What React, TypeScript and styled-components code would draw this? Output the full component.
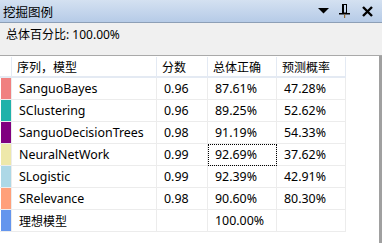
import * as React from "react";
import styled, { createGlobalStyle } from "styled-components";

const GlobalStyle = createGlobalStyle`
  html, body {
    margin: 0;
    padding: 0;
    background: #ffffff;
  }
  body {
    font-family: "Noto Sans", "Noto Sans CJK SC", sans-serif;
    color: #000000;
  }
`;

const Window = styled.div`
  width: 382px;
  height: 243px;
  overflow: hidden;
  display: flex;
  flex-direction: column;
  background: #ffffff;
`;

const TitleBar = styled.div`
  height: 22px;
  flex: none;
  display: flex;
  align-items: center;
  padding-left: 3px;
  padding-right: 9px;
  background: linear-gradient(#d4e1f1, #b6cbe7);
  border-bottom: 1px solid #8d9fb6;
`;

const Title = styled.span`
  flex: 1;
  font-family: "Noto Sans CJK SC", sans-serif;
  font-size: 12.5px;
  line-height: 22px;
  padding-top: 1px;
`;

const TitleButtons = styled.div`
  display: flex;
  align-items: center;
`;

const IconButton = styled.span<{ $gap?: number }>`
  display: flex;
  align-items: center;
  justify-content: center;
  width: 11px;
  height: 16px;
  margin-left: ${(p) => p.$gap ?? 0}px;
`;

const SummaryBar = styled.div`
  height: 33px;
  flex: none;
  box-sizing: border-box;
  padding: 4px 0 0 6px;
  background: #f0f0f0;
  border-bottom: 1px solid #a9a9a9;
  font-size: 12px;
  line-height: 16px;
`;

const GridArea = styled.div`
  flex: 1;
  display: flex;
`;

const GridBody = styled.div`
  flex: 1;
  padding-top: 1px;
`;

const ScrollEdge = styled.div`
  width: 3px;
  background: #a0a0a0;
`;

const Grid = styled.div`
  display: grid;
  grid-template-columns: 12px 145px 51px 69px 69px;
  grid-auto-rows: 22px;
  grid-template-rows: 21px;
`;

const HeadCell = styled.div`
  box-sizing: border-box;
  border-right: 1px solid #e4eaf3;
  border-bottom: 2px solid #e4eaf3;
  padding-left: 5px;
  display: flex;
  align-items: center;
  font-family: "Noto Sans CJK SC", sans-serif;
  font-size: 12px;
  white-space: nowrap;
`;

const Cell = styled.div<{ $cjk?: boolean; $focused?: boolean }>`
  box-sizing: border-box;
  border-right: 1px solid #ececec;
  border-bottom: 1px solid #ececec;
  padding-left: 7px;
  display: flex;
  align-items: center;
  font-family: ${(p) =>
    p.$cjk ? `"Noto Sans CJK SC", sans-serif` : `"Noto Sans", sans-serif`};
  font-size: ${(p) => (p.$cjk ? "12px" : "12.4px")};
  white-space: nowrap;
  outline: ${(p) => (p.$focused ? "1px dotted #000" : "none")};
  outline-offset: -1px;
`;

const SwatchCell = styled.div`
  box-sizing: border-box;
  border-right: 1px solid #ececec;
  border-bottom: 1px solid #ececec;
  padding-left: 1px;
  display: flex;
`;

const Swatch = styled.div<{ $color: string }>`
  flex: 1;
  background: ${(p) => p.$color};
`;

interface Row {
  color: string;
  name: string;
  score: string;
  correct: string;
  prob: string;
}

const rows: Row[] = [
  { color: "#f08080", name: "SanguoBayes", score: "0.96", correct: "87.61%", prob: "47.28%" },
  { color: "#20b2aa", name: "SClustering", score: "0.96", correct: "89.25%", prob: "52.62%" },
  { color: "#800080", name: "SanguoDecisionTrees", score: "0.98", correct: "91.19%", prob: "54.33%" },
  { color: "#eee8aa", name: "NeuralNetWork", score: "0.99", correct: "92.69%", prob: "37.62%" },
  { color: "#add8e6", name: "SLogistic", score: "0.99", correct: "92.39%", prob: "42.91%" },
  { color: "#ffa07a", name: "SRelevance", score: "0.98", correct: "90.60%", prob: "80.30%" },
  { color: "#6495ed", name: "理想模型", score: "", correct: "100.00%", prob: "" },
];

const DropIcon = () => (
  <svg width="11" height="6" viewBox="0 0 11 6">
    <polygon points="0,0 11,0 5.5,5.5" fill="#000" />
  </svg>
);

const PinIcon = () => (
  <svg width="11" height="14" viewBox="0 0 11 14">
    <rect x="3.5" y="0.5" width="4" height="8.5" fill="none" stroke="#000" />
    <rect x="3" y="0" width="2" height="9" fill="#000" />
    <rect x="0" y="9" width="11" height="1.5" fill="#000" />
    <rect x="5" y="10.5" width="1.2" height="3.5" fill="#9a6a2a" />
  </svg>
);

const CloseIcon = () => (
  <svg width="11" height="11" viewBox="0 0 11 11">
    <path d="M1 1 L10 10 M10 1 L1 10" stroke="#000" strokeWidth="2.4" />
  </svg>
);

export default function App() {
  return (
    <>
      <GlobalStyle />
      <Window>
        <TitleBar>
          <Title>挖掘图例</Title>
          <TitleButtons>
            <IconButton>
              <DropIcon />
            </IconButton>
            <IconButton $gap={10}>
              <PinIcon />
            </IconButton>
            <IconButton $gap={12}>
              <CloseIcon />
            </IconButton>
          </TitleButtons>
        </TitleBar>
        <SummaryBar>总体百分比: 100.00%</SummaryBar>
        <GridArea>
          <GridBody>
            <Grid>
              <HeadCell />
              <HeadCell>序列，模型</HeadCell>
              <HeadCell>分数</HeadCell>
              <HeadCell>总体正确</HeadCell>
              <HeadCell>预测概率</HeadCell>
              {rows.map((r) => (
                <React.Fragment key={r.name}>
                  <SwatchCell>
                    <Swatch $color={r.color} />
                  </SwatchCell>
                  <Cell $cjk={/[^\x00-\x7f]/.test(r.name)}>{r.name}</Cell>
                  <Cell>{r.score}</Cell>
                  <Cell $focused={r.name === "NeuralNetWork"}>{r.correct}</Cell>
                  <Cell>{r.prob}</Cell>
                </React.Fragment>
              ))}
            </Grid>
          </GridBody>
          <ScrollEdge />
        </GridArea>
      </Window>
    </>
  );
}
